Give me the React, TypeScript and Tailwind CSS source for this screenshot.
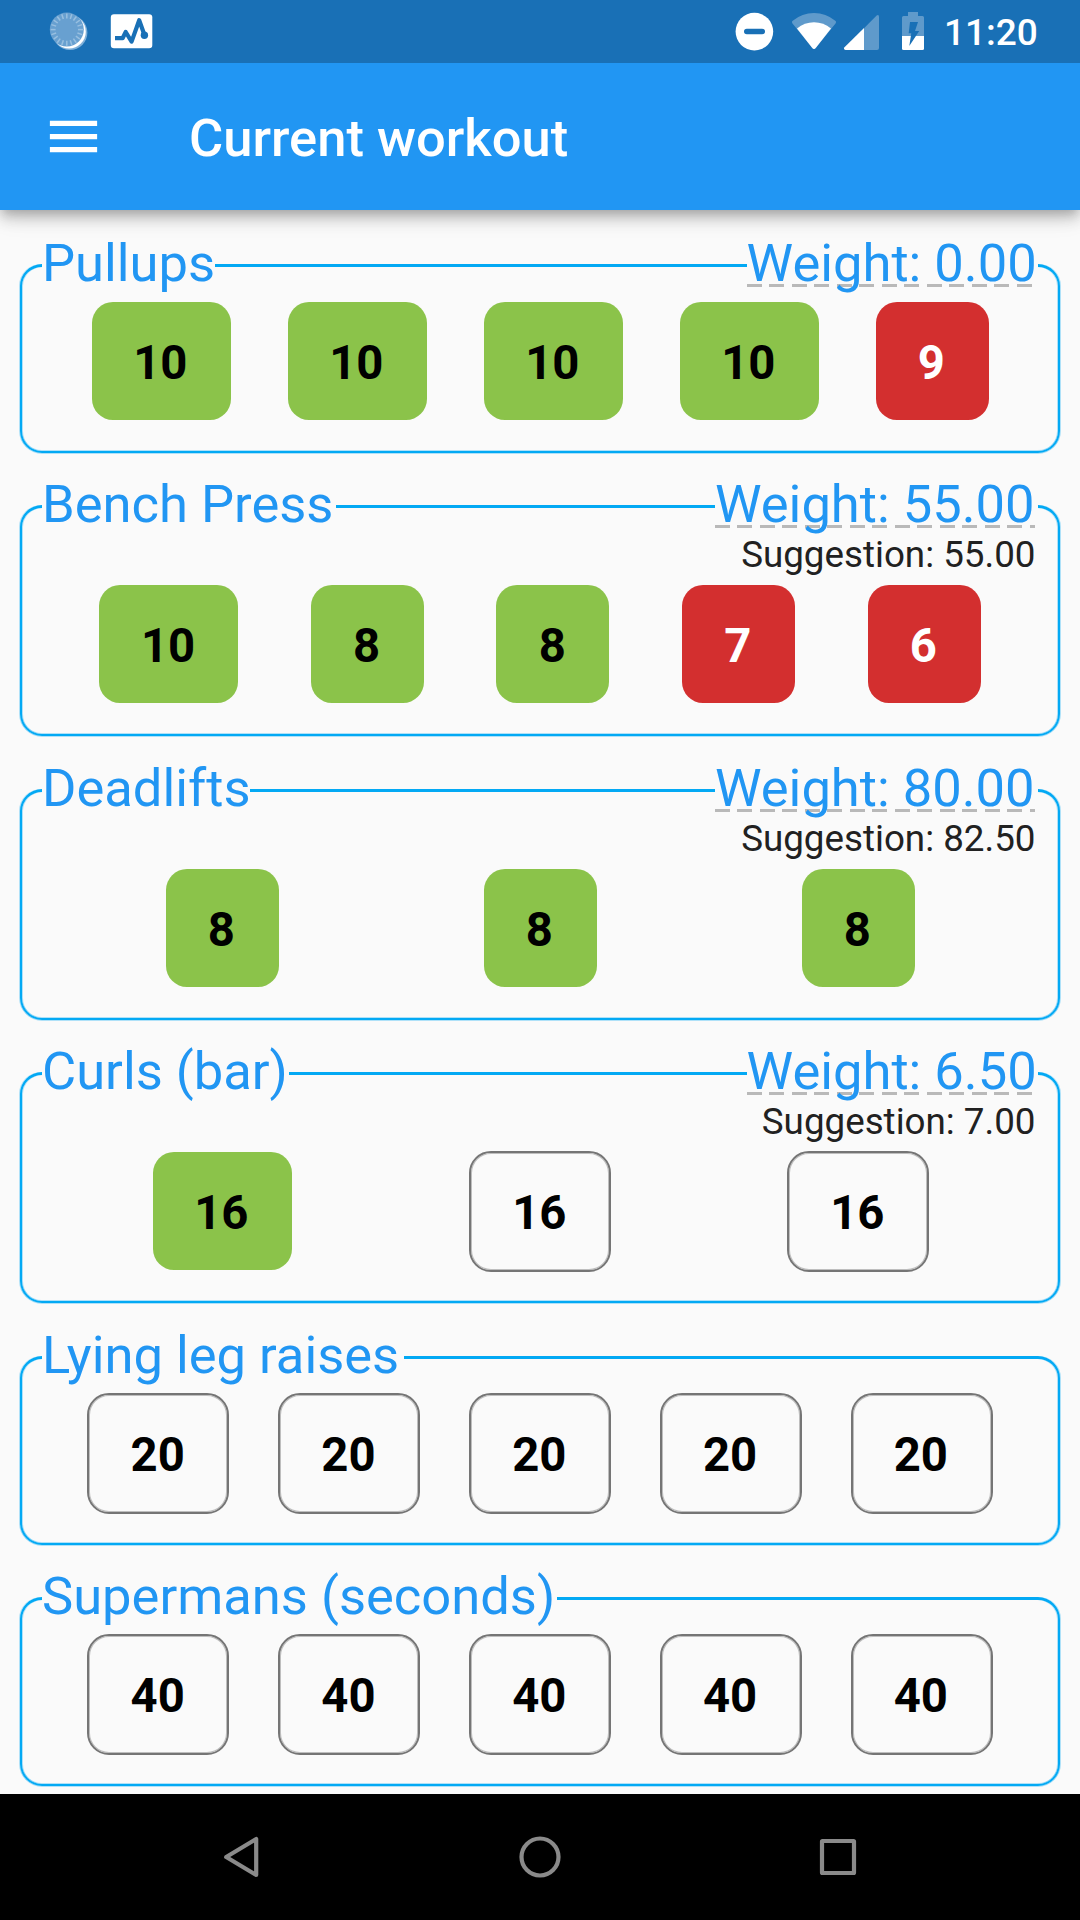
import React from "react";

type SetState = "done" | "failed" | "open";

interface Exercise {
  name: string;
  nameWidth: string;
  weight?: string;
  weightWidth?: string;
  suggestion?: string;
  sets: [number, SetState][];
  spacing: string;
}

const exercises: Exercise[] = [
  {
    name: "Pullups",
    nameWidth: "w-[173px]",
    weight: "0.00",
    weightWidth: "w-[291.4px]",
    sets: [[10, "done"], [10, "done"], [10, "done"], [10, "done"], [9, "failed"]],
    spacing: "mt-[54px]",
  },
  {
    name: "Bench Press",
    nameWidth: "w-[294px]",
    weight: "55.00",
    weightWidth: "w-[323px]",
    suggestion: "55.00",
    sets: [[10, "done"], [8, "done"], [8, "done"], [7, "failed"], [6, "failed"]],
    spacing: "mt-[52px]",
  },
  {
    name: "Deadlifts",
    nameWidth: "w-[208px]",
    weight: "80.00",
    weightWidth: "w-[323px]",
    suggestion: "82.50",
    sets: [[8, "done"], [8, "done"], [8, "done"]],
    spacing: "mt-[53px]",
  },
  {
    name: "Curls (bar)",
    nameWidth: "w-[247px]",
    weight: "6.50",
    weightWidth: "w-[291.4px]",
    suggestion: "7.00",
    sets: [[16, "done"], [16, "open"], [16, "open"]],
    spacing: "mt-[52px]",
  },
  {
    name: "Lying leg raises",
    nameWidth: "w-[362px]",
    sets: [[20, "open"], [20, "open"], [20, "open"], [20, "open"], [20, "open"]],
    spacing: "mt-[53px]",
  },
  {
    name: "Supermans (seconds)",
    nameWidth: "w-[514.5px]",
    sets: [[40, "open"], [40, "open"], [40, "open"], [40, "open"], [40, "open"]],
    spacing: "mt-[52px]",
  },
];

const setStyles: Record<SetState, string> = {
  done: "bg-[#8bc34a] text-black",
  failed: "bg-[#d32f2f] text-white",
  open: "text-black",
};

function SetButton({ reps, state }: { reps: number; state: SetState }) {
  const width = reps > 9 ? "w-[139px]" : "w-[113px]";
  return (
    <button
      className={`relative flex h-[118px] items-center justify-center rounded-[21px] pt-[6px] pr-[1.5px] text-[47.25px] leading-none font-bold ${width} ${setStyles[state]}`}
    >
      {state === "open" && (
        <span className="absolute -inset-x-[1.5px] -top-px -bottom-[2px] rounded-[22px] border-2 border-[#757575] shadow-[inset_0_0_0_1px_rgba(117,117,117,0.45)]" />
      )}
      {reps}
    </button>
  );
}

function ExerciseCard({ exercise }: { exercise: Exercise }) {
  const { name, nameWidth, weight, weightWidth, suggestion, sets, spacing } = exercise;
  return (
    <section
      className={`mx-5 flex shrink-0 flex-col rounded-[22px] border-2 border-t-[3px] border-[#03a9f4] shadow-[1px_0_0_0_rgba(3,169,244,0.3),-1px_0_0_0_rgba(3,169,244,0.3),0_1px_0_0_rgba(3,169,244,0.3),inset_1px_0_0_0_rgba(3,169,244,0.3),inset_-1px_0_0_0_rgba(3,169,244,0.3),inset_0_-1px_0_0_rgba(3,169,244,0.3)] ${spacing}`}
    >
      <header className="-mt-[35px] flex h-[62px] justify-between px-5 text-[52.5px] leading-[62px] whitespace-nowrap text-[#2196f3]">
        <h2 className={`bg-[#fafafa] ${nameWidth}`}>{name}</h2>
        {weight && (
          <div className={`bg-[#fafafa] ${weightWidth}`}>
            <span className="inline-block h-[62px] bg-[repeating-linear-gradient(90deg,#b9b9b9_0_15px,transparent_15px_22.5px)] bg-[length:100%_3px] bg-[position:0_52px] bg-no-repeat">
              Weight: {weight}
            </span>
          </div>
        )}
      </header>
      {suggestion && (
        <p className="mb-0.5 pr-[22.5px] text-right text-[36.75px] leading-[40px] text-[#212121]">
          Suggestion: {suggestion}
        </p>
      )}
      <div className="flex justify-around px-[41px] pt-2 pb-[31px]">
        {sets.map(([reps, state], i) => (
          <SetButton key={i} reps={reps} state={state} />
        ))}
      </div>
    </section>
  );
}

function SyncIcon() {
  const ticks = Array.from({ length: 20 }, (_, i) => i * 18);
  return (
    <svg className="h-[63px] w-[40px]" viewBox="49 0 40 63">
      <circle cx="70" cy="32.6" r="17.4" fill="#7fb0d9" />
      <circle cx="69" cy="31.7" r="16.8" fill="#fff" />
      <circle cx="66.8" cy="29.6" r="17" fill="#68a0d0" />
      {ticks.map((a) => (
        <path key={a} d="M66.8 13.4v5" stroke="#98bfe0" strokeWidth="1.5" transform={`rotate(${a} 66.8 29.6)`} />
      ))}
    </svg>
  );
}

function ChartIcon() {
  return (
    <svg className="ml-[20px] h-[63px] w-[46px]" viewBox="109 0 46 63">
      <rect x="110.8" y="14.3" width="41.5" height="34" rx="3.2" fill="#fff" />
      <path d="M115 38.2h7.6l3.1-6.2 5.9 9.6 7.6-21.4 5 14" fill="none" stroke="#1970b6" strokeWidth="4.2" strokeLinejoin="round" />
      <circle cx="144.4" cy="35.2" r="3.7" fill="#1970b6" />
    </svg>
  );
}

function StatusIcons() {
  return (
    <>
      <svg className="h-[63px] w-[40px]" viewBox="734 0 40 63">
        <circle cx="754.4" cy="31.6" r="18.8" fill="#fff" />
        <rect x="744" y="28.7" width="21" height="5.6" rx="2.8" fill="#1970b6" />
      </svg>
      <svg className="ml-[16px] h-[63px] w-[48px]" viewBox="790 0 48 63">
        <path d="M814 49q-1 0-1.700-.9L792.300 23.200q-1-1.400.4-2.400Q802 13 814 13t21.300 7.800q1.400 1 .4 2.400L815.700 48.100q-.7.9-1.700.9z" fill="#5f9acb" />
        <path d="M814 49q-1 0-1.700-.9L797 28.400Q804.500 22.200 814 22.200t17 6.200L815.700 48.100q-.7.9-1.700.9z" fill="#fff" />
      </svg>
      <svg className="ml-[5px] h-[63px] w-[38px]" viewBox="843 0 38 63">
        <path d="M864 28.200 876.400 15.700Q879 14 879 17v31q0 2-2 2H864z" fill="#5f9acb" />
        <path d="M864 28v22h-18.500q-2.500-.5-1-2.700z" fill="#fff" />
      </svg>
      <svg className="ml-[20px] h-[63px] w-[24px]" viewBox="901 0 24 63">
        <path d="M902 36V17.500q0-1.500 1.500-1.500H908v-4h10v4h4.500q1.500 0 1.500 1.500V36z" fill="#5f9acb" />
        <path d="M902 36h22v12.500q0 1.500-1.500 1.500h-19q-1.500 0-1.500-1.500z" fill="#fff" />
        <path d="M910 22h8l-3 9h4.200L909.300 46l2-12.700h-2.600z" fill="#1970b6" />
      </svg>
    </>
  );
}

export default function App() {
  return (
    <div className="flex h-[1920px] w-[1080px] flex-col overflow-hidden bg-[#fafafa] font-[Roboto,sans-serif]">
      <div className="z-10 flex shrink-0 flex-col bg-[#2196f3] text-white shadow-[0_5px_10px_-3px_rgba(0,0,0,0.2),0_10px_13px_0_rgba(0,0,0,0.14),0_3px_26px_0_rgba(0,0,0,0.12)]">
        <div className="flex h-[63px] items-center justify-between bg-[#1970b6] pr-[40px] pl-[49px]">
          <div className="flex">
            <SyncIcon />
            <ChartIcon />
          </div>
          <div className="flex items-center">
            <StatusIcons />
            <span className="ml-[19px] w-[96px] pt-[3px] text-[37px] leading-[44px] font-medium">11:20</span>
          </div>
        </div>
        <div className="flex h-[147px] items-center pl-[42px]">
          <svg className="size-[63px]" viewBox="0 0 24 24" fill="currentColor">
            <path d="M3 18h18v-2H3v2zm0-5h18v-2H3v2zm0-7v2h18V6H3z" />
          </svg>
          <h1 className="ml-[84px] pt-[2px] text-[52.5px] leading-[62px] font-medium">Current workout</h1>
        </div>
      </div>

      <main className="flex min-h-0 flex-1 flex-col">
        {exercises.map((exercise) => (
          <ExerciseCard key={exercise.name} exercise={exercise} />
        ))}
      </main>

      <nav className="flex h-[126px] shrink-0 items-center justify-between bg-black pr-[220px] pl-[219px]">
        <svg className="size-[44px]" viewBox="219 1835 44 44">
          <path d="M226.200 1857 256.200 1839v36z" fill="none" stroke="#8a8a8a" strokeWidth="4.200" strokeLinejoin="round" />
        </svg>
        <svg className="size-[44px]" viewBox="0 0 44 44">
          <circle cx="22" cy="22" r="18.500" fill="none" stroke="#8a8a8a" strokeWidth="4.200" />
        </svg>
        <svg className="size-[44px]" viewBox="0 0 44 44">
          <rect x="6" y="6" width="32" height="32" rx="0.500" fill="none" stroke="#8a8a8a" strokeWidth="4.200" strokeLinejoin="round" />
        </svg>
      </nav>
    </div>
  );
}
